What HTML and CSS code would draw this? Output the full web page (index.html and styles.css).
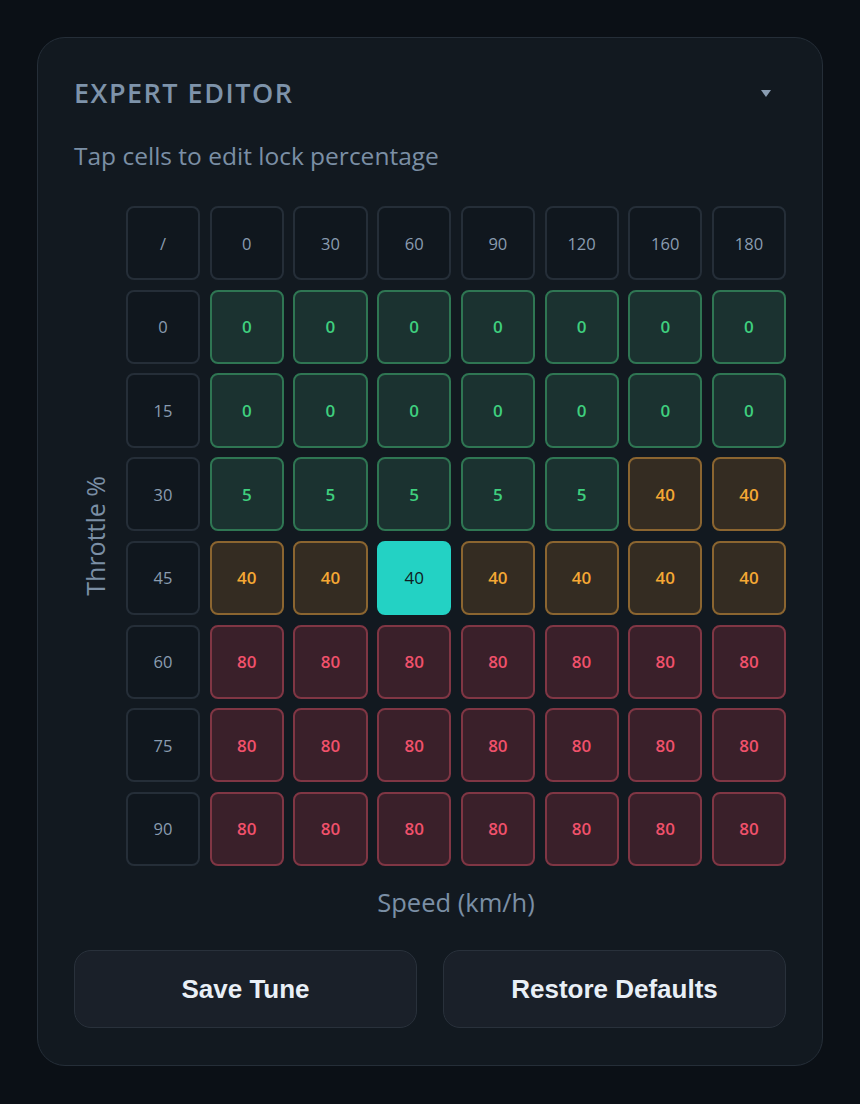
FILE: index.html
```html
<!DOCTYPE html>
<html lang="en">
<head>
  <meta charset="UTF-8">
  <meta name="viewport" content="width=device-width, initial-scale=1.0">
  <title>Expert Editor</title>
  <link rel="stylesheet" href="styles.css">
</head>
<body>
<div class="card">
  <div class="card-head">
    <h2 class="title">EXPERT EDITOR</h2>
    <span class="caret"></span>
  </div>
  <p class="hint">Tap cells to edit lock percentage</p>

  <div class="map">
    <div class="y-label"><span>Throttle %</span></div>
    <div class="grid" id="grid"></div>
    <div class="x-label">Speed (km/h)</div>
  </div>

  <div class="actions">
    <button class="btn">Save Tune</button>
    <button class="btn">Restore Defaults</button>
  </div>
</div>

<script>
  const speeds = [0, 30, 60, 90, 120, 160, 180];
  const throttle = [0, 15, 30, 45, 60, 75, 90];
  const table = [
    [0, 0, 0, 0, 0, 0, 0],
    [0, 0, 0, 0, 0, 0, 0],
    [5, 5, 5, 5, 5, 40, 40],
    [40, 40, 40, 40, 40, 40, 40],
    [80, 80, 80, 80, 80, 80, 80],
    [80, 80, 80, 80, 80, 80, 80],
    [80, 80, 80, 80, 80, 80, 80]
  ];
  const selected = [3, 2];
  const grid = document.getElementById("grid");

  function cell(text, cls) {
    const el = document.createElement("div");
    el.className = "cell " + cls;
    el.textContent = text;
    grid.appendChild(el);
  }

  function level(v) {
    if (v >= 60) return "high";
    if (v >= 20) return "mid";
    return "low";
  }

  cell("/", "axis");
  speeds.forEach(s => cell(s, "axis"));
  throttle.forEach((t, r) => {
    cell(t, "axis");
    table[r].forEach((v, c) => {
      const active = r === selected[0] && c === selected[1];
      cell(v, active ? "active" : level(v));
    });
  });
</script>
</body>
</html>
```

FILE: styles.css
```css
html, body {
  margin: 0;
  padding: 0;
  background: #0b1016;
}
body {
  padding: 37px;
  font-family: "Open Sans", "Noto Sans", sans-serif;
}
.card {
  background: #121920;
  border: 1px solid #252e38;
  border-radius: 28px;
  padding: 35px 36px 37px;
}
.card-head {
  display: flex;
  align-items: center;
  justify-content: space-between;
}
.title {
  margin: 0;
  font-size: 27px;
  font-weight: 600;
  letter-spacing: 1.5px;
  color: #7e93aa;
  line-height: 40px;
}
.caret {
  width: 0;
  height: 0;
  border-left: 5px solid transparent;
  border-right: 5px solid transparent;
  border-top: 7px solid #8a9db2;
  margin-right: 15px;
}
.hint {
  margin: 27px 0 0;
  font-size: 24.5px;
  line-height: 32px;
  color: #7b8fa5;
}
.map {
  margin-top: 34px;
  display: grid;
  grid-template-columns: 42px 1fr;
  column-gap: 10px;
  row-gap: 20px;
}
.y-label {
  display: flex;
  align-items: center;
  justify-content: center;
}
.y-label span {
  writing-mode: vertical-rl;
  transform: rotate(180deg);
  font-size: 25px;
  color: #7b8fa5;
  white-space: nowrap;
}
.grid {
  display: grid;
  grid-template-columns: repeat(8, 1fr);
  gap: 9.6px;
}
.cell {
  aspect-ratio: 1;
  box-sizing: border-box;
  border-radius: 8px;
  border: 2px solid;
  display: flex;
  align-items: center;
  justify-content: center;
  font-size: 17px;
  font-weight: 600;
}
.axis {
  background: #10171e;
  border-color: #252e38;
  color: #8a9cb0;
  font-size: 16.5px;
  font-weight: 500;
}
.low {
  background: #1b3230;
  border-color: #2f7653;
  color: #3fcf7e;
}
.mid {
  background: #342c22;
  border-color: #8b6530;
  color: #f5a834;
}
.high {
  background: #3a202a;
  border-color: #803644;
  color: #f0516b;
}
.active {
  background: #23d2c4;
  border-color: #23d2c4;
  color: #0f1c22;
  font-weight: 500;
}
.x-label {
  grid-column: 2;
  text-align: center;
  font-size: 25.5px;
  color: #7b8fa5;
  line-height: 32px;
}
.actions {
  margin-top: 32px;
  display: flex;
  gap: 26px;
}
.btn {
  flex: 1;
  height: 78px;
  background: #1a2029;
  border: 1.5px solid #29313b;
  border-radius: 17px;
  color: #e9eff6;
  font-family: "Liberation Sans", Arial, sans-serif;
  font-size: 26px;
  font-weight: 700;
  cursor: pointer;
}
```
